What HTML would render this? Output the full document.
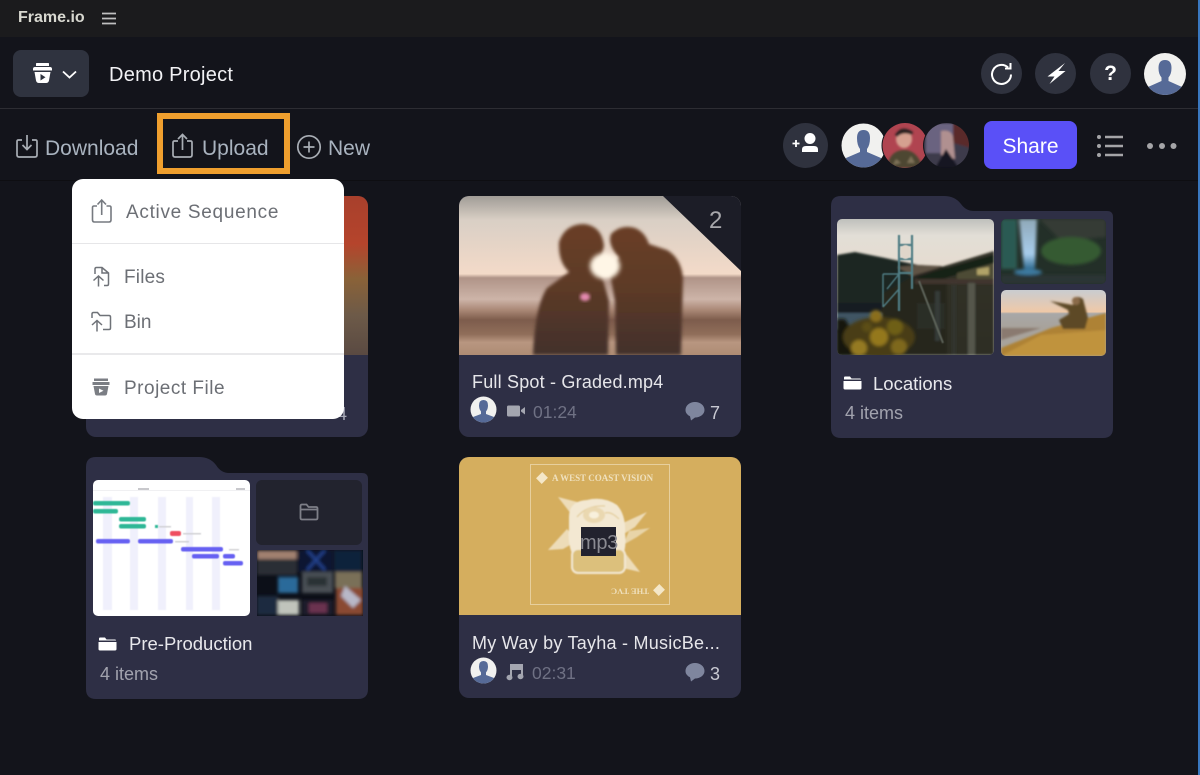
<!DOCTYPE html>
<html><head><meta charset="utf-8"><style>
*{box-sizing:border-box;margin:0;padding:0}
html,body{width:1200px;height:775px;overflow:hidden;background:#13141b}
body{position:relative;font-family:"Liberation Sans","DejaVu Sans",sans-serif;color:#e8e8ee}
.a{position:absolute}
.t{position:absolute;white-space:nowrap;line-height:1}
.card{position:absolute;width:282px;height:241px;background:#2e2f45;border-radius:10px;overflow:hidden}
.c{position:absolute;border-radius:50%;background:#2f323e}
svg{position:absolute;display:block}
</style></head><body>
<svg width="0" height="0" style="left:0;top:0"><defs>
<filter id="b04" x="-10%" y="-10%" width="120%" height="120%"><feGaussianBlur stdDeviation=".45"/></filter>
<filter id="b08" x="-10%" y="-10%" width="120%" height="120%"><feGaussianBlur stdDeviation=".8"/></filter>
<filter id="b1" x="-20%" y="-20%" width="140%" height="140%"><feGaussianBlur stdDeviation="1"/></filter>
<filter id="b2" x="-20%" y="-20%" width="140%" height="140%"><feGaussianBlur stdDeviation="1.500"/></filter>
<filter id="b3" x="-30%" y="-30%" width="160%" height="160%"><feGaussianBlur stdDeviation="2.500"/></filter>
<clipPath id="mc"><circle cx="13.500" cy="13.500" r="13"/></clipPath>
<g id="mini"><circle cx="13.500" cy="13.500" r="13" fill="#f1f1ef"/><path clip-path="url(#mc)" d="M9 9.500Q9 4 13.500 4T18 9.500Q18 13 16 15.500V18L24 21V27H3V21L11 18V15.500Q9 13 9 9.500Z" fill="#566a97"/></g>
</defs></svg>

<div class="a" style="left:0;top:0;width:1200px;height:37px;background:#1b1b1d"></div>
<div class="t" style="left:18px;top:10px;font-size:16px;font-weight:bold;color:#d8d8d0">Frame.io</div>
<svg style="left:102px;top:12px" width="14" height="13"><path d="M0 1.500H14M0 6.500H14M0 11.500H14" stroke="#c0c0c0" stroke-width="1.700"/></svg>
<div class="a" style="left:0;top:108px;width:1200px;height:1px;background:#2d2d33"></div>
<div class="a" style="left:0;top:180px;width:1200px;height:1px;background:#0e0e12"></div>
<div class="a" style="left:13px;top:50px;width:76px;height:47px;border-radius:8px;background:#2f333f"></div>
<svg style="left:32px;top:62px" width="48" height="24" viewBox="0 0 48 24"><path d="M4 1.500Q4 1 5 1H16Q17 1 17 1.500V4H4ZM1 7Q1 5 3 5H18Q20 5 20 7V8.500H1ZM2.500 10H18.500L17 18.500Q16.500 21 14 21H7Q4.500 21 4 18.500Z" fill="#fff"/><path d="M8.500 12L13.500 15.300L8.500 18.500Z" fill="#2f333f"/><path d="M31 9.500L37.500 15.500L44 9.500" stroke="#fff" stroke-width="1.800" fill="none"/></svg>
<div class="t" style="left:109px;top:65px;font-size:20px;letter-spacing:.25px;color:#f2f2f5">Demo Project</div>

<!-- top right circles -->
<div class="c" style="left:981px;top:53px;width:41px;height:41px"></div>
<svg style="left:981px;top:53px" width="41" height="41" viewBox="0 0 41 41"><path d="M27 14.500A9.500 9.500 0 1 0 30 21.500" stroke="#fff" stroke-width="2" fill="none"/><path d="M24 15.500H29.500V10" stroke="#fff" stroke-width="2" fill="none"/></svg>
<div class="c" style="left:1035px;top:53px;width:41px;height:41px"></div>
<svg style="left:1035px;top:53px" width="41" height="41" viewBox="0 0 41 41"><path d="M30 10L12.500 23.500H19.500L14.500 31L30.500 18H23.500Z" fill="#fff"/></svg>
<div class="c" style="left:1090px;top:53px;width:41px;height:41px"></div>
<div class="t" style="left:1090px;top:63px;width:41px;text-align:center;font-size:21px;font-weight:bold;color:#fff">?</div>
<svg style="left:1144px;top:53px" width="42" height="42" viewBox="0 0 42 42"><defs><clipPath id="av"><circle cx="21" cy="21" r="21"/></clipPath></defs><g clip-path="url(#av)"><rect width="42" height="42" fill="#f1f1ef"/><path d="M14.500 15Q14.500 7 21 7T27.500 15Q27.500 21 24.500 24.500V28L38 34V42H4V34L17.500 28V24.500Q14.500 21 14.500 15Z" fill="#566a97"/></g></svg>

<!-- toolbar -->
<svg style="left:15px;top:132px" width="24" height="28" viewBox="0 0 24 28"><path d="M7 8H3.500Q2 8 2 9.500V23Q2 25 4 25H20Q22 25 22 23V9.500Q22 8 20.500 8H17" stroke="#a9aeb5" stroke-width="1.700" fill="none"/><path d="M12 3V17M7.500 13L12 17.500L16.500 13" stroke="#a9aeb5" stroke-width="1.700" fill="none"/></svg>
<div class="t" style="left:45px;top:138px;font-size:21px;color:#a9b3bf">Download</div>
<div class="a" style="left:157px;top:113px;width:133px;height:61px;border:6px solid #ef9f2e"></div>
<svg style="left:171px;top:132px" width="24" height="28" viewBox="0 0 24 28"><path d="M7 9H3.500Q2 9 2 10.500V23Q2 25 4 25H19Q21 25 21 23V10.500Q21 9 19.500 9H16" stroke="#a9aeb5" stroke-width="1.700" fill="none"/><path d="M11.500 18V3M7 7L11.500 2.500L16 7" stroke="#a9aeb5" stroke-width="1.700" fill="none"/></svg>
<div class="t" style="left:202px;top:138px;font-size:21px;color:#a9b3bf">Upload</div>
<svg style="left:296px;top:134px" width="26" height="26" viewBox="0 0 26 26"><circle cx="13" cy="13" r="11.200" stroke="#a9aeb5" stroke-width="1.700" fill="none"/><path d="M13 7.500V18.500M7.500 13H18.500" stroke="#a9aeb5" stroke-width="1.700"/></svg>
<div class="t" style="left:328px;top:138px;font-size:21px;color:#a9b3bf">New</div>

<div class="c" style="left:783px;top:123px;width:45px;height:45px"></div>
<svg style="left:783px;top:123px" width="45" height="45" viewBox="0 0 45 45"><circle cx="27" cy="15.500" r="5.500" fill="#fff"/><path d="M19 29V26.500Q19 23 23 23H31Q35 23 35 26.500V29Z" fill="#fff"/><path d="M9.500 20.500H16.500M13 17V24" stroke="#fff" stroke-width="1.800"/></svg>
<svg style="left:841px;top:123px" width="130" height="45" viewBox="0 0 130 45"><defs><clipPath id="a1"><circle cx="22.500" cy="22.500" r="22"/></clipPath><clipPath id="a2"><circle cx="64" cy="22.500" r="22.500"/></clipPath><clipPath id="a3"><circle cx="105.500" cy="22.500" r="22.500"/></clipPath></defs>
<g clip-path="url(#a1)"><rect width="45" height="45" fill="#f1f1ef"/><path d="M16 15Q16 7 22.500 7T29 15Q29 22 26 26V29L40 35V45H5V35L19 29V26Q16 22 16 15Z" fill="#566a97"/></g>
<circle cx="64" cy="22.500" r="23.500" fill="#13141b"/>
<g clip-path="url(#a2)"><rect x="40" width="48" height="45" fill="#b04450"/><g filter="url(#b1)"><ellipse cx="63" cy="16" rx="8" ry="9" fill="#d5a090"/><path d="M54 12Q60 1 72 9L71 12Q62 8 56 14Z" fill="#2a2320"/><path d="M46 45Q48 28 62 27T82 45Z" fill="#4e4630"/><path d="M55 36L60 40L52 42ZM70 33L74 40L66 40Z" fill="#7e7258"/></g></g>
<circle cx="105.500" cy="22.500" r="23.500" fill="#13141b"/>
<g clip-path="url(#a3)"><g filter="url(#b1)"><rect x="82" width="48" height="45" fill="#3d3b4c"/><path d="M85 0H112V30H85Z" fill="#6b6380"/><path d="M112 0H130V25L112 20Z" fill="#5a2a2a"/><path d="M100 8Q110 6 112 14L114 36L100 32Z" fill="#b09090"/><path d="M94 45L105 26L118 45Z" fill="#141820"/></g></g></svg>
<div class="a" style="left:984px;top:121px;width:93px;height:48px;border-radius:8px;background:#5a50f7"></div>
<div class="t" style="left:984px;top:136px;width:93px;text-align:center;font-size:21px;color:#fff">Share</div>
<svg style="left:1095px;top:132px" width="30" height="28"><path d="M10 5H28M10 14H28M10 23H28" stroke="#a5a5a8" stroke-width="2.500"/><circle cx="4" cy="5" r="2" fill="#a5a5a8"/><circle cx="4" cy="14" r="2" fill="#a5a5a8"/><circle cx="4" cy="23" r="2" fill="#a5a5a8"/></svg>
<svg style="left:1146px;top:141px" width="32" height="10"><circle cx="4" cy="5" r="3" fill="#a5a5a8"/><circle cx="16" cy="5" r="3" fill="#a5a5a8"/><circle cx="27.500" cy="5" r="3" fill="#a5a5a8"/></svg>

<!-- card hidden under menu -->
<div class="card" style="left:86px;top:196px">
<div class="a" style="left:0;top:0;width:282px;height:159px;background:linear-gradient(180deg,#a8402c 0,#b5442c 30%,#8a6238 52%,#6d5a48 75%,#5a4a42 100%)"></div>
</div>
<div class="t" style="left:337px;top:405px;font-size:18px;color:#a9abb8">4</div>

<!-- Full spot card -->
<div class="card" style="left:459px;top:196px">
<svg style="left:0;top:0" width="282" height="159" viewBox="0 0 282 159"><defs>
<linearGradient id="sky" x1="0" y1="0" x2="0" y2="1"><stop offset="0" stop-color="#a09c96"/><stop offset=".15" stop-color="#d9cfc5"/><stop offset=".49" stop-color="#f3dac8"/><stop offset=".515" stop-color="#b09488"/><stop offset=".65" stop-color="#cdb4a8"/><stop offset=".72" stop-color="#a88674"/><stop offset=".78" stop-color="#7d5c4c"/><stop offset=".87" stop-color="#906e5a"/><stop offset=".92" stop-color="#b89680"/><stop offset="1" stop-color="#ae8c74"/></linearGradient>
<linearGradient id="fig" x1="0" y1="0" x2="0" y2="1"><stop offset="0" stop-color="#6a3f28"/><stop offset=".5" stop-color="#5c3a28"/><stop offset="1" stop-color="#42302a"/></linearGradient></defs>
<rect width="282" height="159" fill="url(#sky)"/>
<g filter="url(#b2)"><path d="M74 159Q76 110 88 92L110 76Q99 66 100 46Q106 28 125 28Q143 30 145 50L140 70L150 105L149 159Z" fill="url(#fig)"/><path d="M157 159L156 105L150 72L160 62Q148 48 152 38Q162 28 176 32Q186 36 190 48L208 54Q222 62 224 82L222 159Z" fill="url(#fig)"/></g>
<ellipse cx="146" cy="70" rx="15" ry="13" fill="#fff6e6" filter="url(#b3)"/><ellipse cx="126" cy="101" rx="5" ry="4" fill="#e58ab0" filter="url(#b2)"/>
<path d="M204 0H282V75Z" fill="#1c1d27"/></svg>
<div class="t" style="left:250px;top:13px;font-size:24px;color:#a8a8ac">2</div>
<div class="t" style="left:13px;top:177px;font-size:18px;letter-spacing:.2px;color:#e6e6ea">Full Spot - Graded.mp4</div>
<svg style="left:11px;top:200px" width="27" height="27" viewBox="0 0 27 27"><use href="#mini"/></svg>
<svg style="left:48px;top:209px" width="19" height="12"><rect width="13" height="11" rx="1.500" y=".5" fill="#a4a6b0"/><path d="M14 5L18 2V9.500L14 6.500Z" fill="#a4a6b0"/></svg>
<div class="t" style="left:74px;top:208px;font-size:17.500px;color:#6f7184">01:24</div>
<svg style="left:226px;top:205px" width="20" height="20" viewBox="0 0 20 20"><path d="M10 1C4.500 1 .5 4.500 .5 9C.5 12 2.500 14 5 15.300L6 19.500L10 16.500C15.500 16.500 19.500 13 19.500 9C19.500 4.500 15.500 1 10 1Z" fill="#7f869e"/></svg>
<div class="t" style="left:251px;top:208px;font-size:18px;color:#c8c9d2">7</div>
</div>

<!-- Locations folder -->
<svg style="left:831px;top:196px" width="282" height="242" viewBox="0 0 282 242"><path d="M0 10Q0 0 10 0H113Q124 0 130 8Q135 15 143 15H276Q282 15 282 21V232Q282 242 272 242H10Q0 242 0 232Z" fill="#2e2f45"/></svg>
<svg style="left:837px;top:219px" width="157" height="136" viewBox="0 0 157 136"><defs><clipPath id="r1"><rect width="157" height="136" rx="5"/></clipPath><linearGradient id="ls" x1="0" y1="0" x2="0" y2="1"><stop offset="0" stop-color="#bfc0bc"/><stop offset=".12" stop-color="#e2ded6"/><stop offset=".35" stop-color="#e6dcd0"/><stop offset="1" stop-color="#a5a8a0"/></linearGradient></defs>
<g clip-path="url(#r1)"><rect width="157" height="136" fill="url(#ls)"/>
<g filter="url(#b1)"><path d="M0 36L18 33L48 39L81 46L110 48V136H0Z" fill="#1c2522"/><path d="M60 48L81 46L105 47L80 60Z" fill="#5e5244"/>
<rect y="84" width="110" height="30" fill="#161d20"/><rect y="94" width="45" height="16" fill="#3f5464"/><rect x="80" y="84" width="28" height="26" fill="#96a6ae"/>
<path d="M45 136V75L78 56L157 32V136Z" fill="#26261f" opacity=".95"/><path d="M80 58L157 36V46L80 66Z" fill="#142019"/><path d="M120 54L157 44V62H120Z" fill="#4e4c36"/><path d="M140 50L152 48V56H140Z" fill="#b0a268"/><rect x="78" y="60" width="79" height="5" fill="#40362d"/>
<rect x="131" y="64" width="7" height="72" fill="#54564c"/><rect x="115" y="66" width="4" height="70" fill="#33352f"/><rect x="98" y="72" width="5" height="50" fill="#343a38"/></g>
<g filter="url(#b04)" fill="none" stroke="#4f7d84" stroke-width="2.200"><path d="M62 16V92M75 16V70M62 26H75M62 40H75M62 54H75"/><path d="M46 55H62M46 55V88M50 70L62 55M62 70L46 88" stroke-width="1.400"/></g>
<ellipse cx="68.500" cy="33" rx="5" ry="7" fill="#e0d6ca" filter="url(#b04)"/>
<path d="M82 62L106 124" stroke="#5c6259" stroke-width="2" filter="url(#b04)"/>
<g filter="url(#b2)"><path d="M0 100H8L30 136H0Z" fill="#12170f"/><ellipse cx="42" cy="118" rx="36" ry="20" fill="#4a3e14"/><circle cx="39" cy="97" r="6" fill="#8a6e1c"/><circle cx="58" cy="108" r="8" fill="#6e5e18"/><circle cx="42" cy="118" r="9" fill="#94781f"/><circle cx="22" cy="129" r="8" fill="#957a22"/><circle cx="62" cy="128" r="8" fill="#7e671c"/><circle cx="30" cy="108" r="5" fill="#5c4e14"/></g></g></svg>
<svg style="left:1001px;top:219px" width="105" height="65" viewBox="0 0 105 65"><defs><clipPath id="r2"><rect width="105" height="65" rx="5"/></clipPath><linearGradient id="fall" x1="0" y1="0" x2="0" y2="1"><stop offset="0" stop-color="#8fa8b8"/><stop offset=".7" stop-color="#a8cdec"/><stop offset="1" stop-color="#2d6a90"/></linearGradient></defs>
<g clip-path="url(#r2)"><rect width="105" height="65" fill="#232f28"/><g filter="url(#b2)"><path d="M0 0H16V50H0Z" fill="#2a5a52"/><path d="M38 0H105V18L60 22Z" fill="#343a35"/><ellipse cx="70" cy="32" rx="30" ry="14" fill="#345a33"/><path d="M18 0H36L34 50H23Z" fill="url(#fall)"/><ellipse cx="27" cy="53" rx="14" ry="3" fill="#3d7aa0"/><rect y="56" width="105" height="9" fill="#2c3534"/></g></g></svg>
<svg style="left:1001px;top:290px" width="105" height="66" viewBox="0 0 105 66"><defs><clipPath id="r3"><rect width="105" height="66" rx="5"/></clipPath><linearGradient id="s3" x1="0" y1="0" x2="0" y2="1"><stop offset="0" stop-color="#c9ccd0"/><stop offset=".33" stop-color="#efc9a8"/><stop offset=".36" stop-color="#a8a8a8"/><stop offset=".55" stop-color="#a8a39c"/></linearGradient></defs>
<g clip-path="url(#r3)"><rect width="105" height="66" fill="url(#s3)"/><g filter="url(#b1)"><path d="M0 38H40L0 50Z" fill="#8a7a70"/><path d="M0 58L50 38L105 23V66H0Z" fill="#ae8234"/><path d="M0 66L40 45L105 40V66Z" fill="#c0933c"/><path d="M49 11L72 15L72 9Q76 5 82 9L87 28L84 39H62L58 30L68 24L67 20Z" fill="#5d4a28"/><circle cx="75" cy="11" r="4" fill="#8a6a48"/></g></g></svg>
<svg style="left:843px;top:376px" width="20" height="14" viewBox="0 0 20 14"><path d="M1 1.500Q1 .5 2 .5H7L8.500 2.500H17Q18 2.500 18 3.500H1Z" fill="#fff"/><path d="M.5 5H18.500V12Q18.500 13.500 17 13.500H2Q.5 13.500 .5 12Z" fill="#fff"/></svg>
<div class="t" style="left:873px;top:375px;font-size:18.500px;color:#e8e8ec">Locations</div>
<div class="t" style="left:845px;top:404px;font-size:18px;color:#a2a3ae">4 items</div>

<!-- Pre-production -->
<svg style="left:86px;top:457px" width="282" height="242" viewBox="0 0 282 242"><path d="M0 10Q0 0 10 0H113Q124 0 130 8Q135 16 143 16H276Q282 16 282 22V232Q282 242 272 242H10Q0 242 0 232Z" fill="#2e2f45"/></svg>
<svg style="left:93px;top:480px" width="157" height="136" viewBox="0 0 157 136"><defs><clipPath id="r4"><rect width="157" height="136" rx="5"/></clipPath></defs><g clip-path="url(#r4)"><rect width="157" height="136" fill="#fff"/>
<g fill="#f0f0fc" filter="url(#b04)"><rect x="10" y="17" width="9" height="113"/><rect x="37" y="17" width="8" height="113"/><rect x="65" y="17" width="8" height="113"/><rect x="93" y="17" width="7" height="113"/><rect x="119" y="17" width="8" height="113"/></g>
<rect y="10" width="157" height="1" fill="#f0f0f2"/><rect x="45" y="8" width="11" height="2" fill="#c8c8cc"/><rect x="143" y="8" width="9" height="2" fill="#c8c8cc"/>
<g filter="url(#b04)"><g fill="#2fb796"><rect y="21" width="37" height="4.500" rx="2"/><rect y="29" width="25" height="4.500" rx="2"/><rect x="26" y="37" width="27" height="4.500" rx="2"/><rect x="26" y="44" width="27" height="4.500" rx="2"/><rect x="62" y="45" width="3" height="3"/></g>
<rect x="77" y="51" width="11" height="5" rx="2" fill="#ef4e5e"/>
<g fill="#6661f2"><rect x="3" y="59" width="34" height="4.500" rx="2"/><rect x="45" y="59" width="35" height="4.500" rx="2"/><rect x="88" y="67" width="42" height="4.500" rx="2"/><rect x="99" y="74" width="27" height="4.500" rx="2"/><rect x="130" y="74" width="12" height="4.500" rx="2"/><rect x="130" y="81" width="20" height="4.500" rx="2"/></g>
<g fill="#d0d0d4"><rect x="66" y="46" width="12" height="1.500"/><rect x="90" y="53" width="18" height="1.500"/><rect x="82" y="61" width="14" height="1.500"/><rect x="136" y="69" width="10" height="1.500"/></g></g></g></svg>
<div class="a" style="left:256px;top:480px;width:106px;height:65px;border-radius:6px;background:#22232e"></div>
<svg style="left:299px;top:503px" width="20" height="18" viewBox="0 0 20 18"><path d="M1.500 3Q1.500 1.500 3 1.500H7.500L9.500 4H17Q18.500 4 18.500 5.500V15Q18.500 16.500 17 16.500H3Q1.500 16.500 1.500 15ZM1.500 6.500H18.500" stroke="#7e7f88" stroke-width="1.800" fill="none"/></svg>
<svg style="left:257px;top:550px" width="106" height="66" viewBox="0 0 106 66"><rect width="106" height="66" fill="#0c0f18"/><g filter="url(#b2)"><rect width="40" height="25" fill="#2a2d34"/><rect y="1" width="40" height="8" fill="#a08070"/><rect x="41" width="35" height="22" fill="#0c1230"/><path d="M50 0L68 20M68 0L50 20" stroke="#22408a" stroke-width="3"/><rect x="77" width="28" height="22" fill="#10203a"/><rect x="21" y="27" width="20" height="16" fill="#2a6a9a"/><rect x="45" y="22" width="31" height="21" fill="#4a5055"/><rect x="50" y="27" width="20" height="9" fill="#2c3036"/><rect x="78" y="22" width="27" height="16" fill="#7a7058"/><rect x="79" y="38" width="27" height="27" fill="#8a4a30"/><path d="M88 36L104 50L96 58L84 46Z" fill="#b8b8c8"/><rect y="46" width="21" height="19" fill="#1a2a40"/><rect x="21" y="50" width="21" height="15" fill="#c0c4bc"/><rect x="45" y="50" width="31" height="15" fill="#1e1a2a"/><rect x="52" y="53" width="18" height="10" fill="#6a3050"/></g></svg>
<svg style="left:98px;top:637px" width="20" height="14" viewBox="0 0 20 14"><path d="M1 1.500Q1 .5 2 .5H7L8.500 2.500H17Q18 2.500 18 3.500H1Z" fill="#fff"/><path d="M.5 5H18.500V12Q18.500 13.500 17 13.500H2Q.5 13.500 .5 12Z" fill="#fff"/></svg>
<div class="t" style="left:129px;top:635px;font-size:18.500px;color:#e8e8ec">Pre-Production</div>
<div class="t" style="left:100px;top:665px;font-size:18px;color:#a2a3ae">4 items</div>

<!-- MP3 -->
<div class="card" style="left:459px;top:457px;height:241px">
<div class="a" style="left:0;top:0;width:282px;height:158px;background:#d5ae5e"></div>
<div class="a" style="left:71px;top:7px;width:140px;height:141px;border:1.500px solid #e7cf9d"></div>
<div class="a" style="left:79px;top:17px;width:8px;height:8px;background:#f4e7c8;transform:rotate(45deg) scale(1,1.100)"></div>
<div class="t" style="left:93px;top:17px;font-size:9px;font-weight:bold;font-family:'Liberation Serif',serif;color:#efe0bd">A WEST COAST VISION</div>
<div class="a" style="left:196px;top:129px;width:8px;height:8px;background:#f4e7c8;transform:rotate(45deg) scale(1,1.100)"></div>
<div class="t" style="left:152px;top:130px;font-size:8.500px;font-weight:bold;font-family:'Liberation Serif',serif;color:#efe0bd;transform:rotate(180deg)">THE TVC</div>
<svg style="left:0;top:0" width="282" height="158" viewBox="0 0 282 158"><g filter="url(#b08)">
<path d="M99 40L122 46L116 62Z" fill="#eddcb8"/><path d="M89 93L108 72L118 84L104 92Z" fill="#eddcb8"/><path d="M188 55L164 66L160 80L176 70Z" fill="#eddcb8"/><path d="M191 71L170 74L164 88L178 80Z" fill="#e8d4a8"/><path d="M181 115L160 88L150 108Z" fill="#eddcb8"/>
<path d="M110 60Q110 44 128 43Q144 39 158 48Q167 58 166 76Q168 92 162 104H116Q108 88 110 72Z" fill="#f3e8d2"/>
<rect x="113" y="92" width="53" height="24" rx="6" fill="#dcc07c" stroke="#f3e8d2" stroke-width="2"/>
<path d="M118 60Q128 48 146 49M160 62Q152 54 146 56" stroke="#e2cc98" stroke-width="1.200" fill="none"/><ellipse cx="135" cy="58" rx="11" ry="8" fill="#ead8b0"/><ellipse cx="135" cy="58" rx="5" ry="3.500" fill="#f8f0dc"/></g></svg>
<div class="a" style="left:122px;top:70px;width:35px;height:29px;background:#22222e"></div>
<div class="t" style="left:121px;top:76px;font-size:20px;color:#8a8a92;letter-spacing:-.3px">mp3</div>
<div class="t" style="left:13px;top:177px;font-size:18px;letter-spacing:.25px;color:#e6e6ea">My Way by Tayha - MusicBe...</div>
<svg style="left:11px;top:200px" width="27" height="27" viewBox="0 0 27 27"><use href="#mini"/></svg>
<svg style="left:47px;top:206px" width="19" height="18" viewBox="0 0 19 18"><path d="M5 3V14M16 2V13M5 2H16V6H5Z" stroke="#a4a6b0" stroke-width="2" fill="#a4a6b0"/><ellipse cx="3.500" cy="14.500" rx="3" ry="2.700" fill="#a4a6b0"/><ellipse cx="14.500" cy="13.500" rx="3" ry="2.700" fill="#a4a6b0"/></svg>
<div class="t" style="left:73px;top:208px;font-size:17.500px;color:#6f7184">02:31</div>
<svg style="left:226px;top:205px" width="20" height="20" viewBox="0 0 20 20"><path d="M10 1C4.500 1 .5 4.500 .5 9C.5 12 2.500 14 5 15.300L6 19.500L10 16.500C15.500 16.500 19.500 13 19.500 9C19.500 4.500 15.500 1 10 1Z" fill="#7f869e"/></svg>
<div class="t" style="left:251px;top:208px;font-size:18px;color:#c8c9d2">3</div>
</div>

<!-- Dropdown -->
<div class="a" style="left:72px;top:179px;width:272px;height:240px;background:#fff;border-radius:11px"></div>
<div class="a" style="left:72px;top:243px;width:272px;height:1px;background:#e6e6e8"></div>
<div class="a" style="left:72px;top:353px;width:272px;height:2px;background:#e9e9eb"></div>
<svg style="left:91px;top:198px" width="22" height="26" viewBox="0 0 22 26"><path d="M6 8H3Q1.500 8 1.500 9.500V22Q1.500 24 3.500 24H18Q20 24 20 22V9.500Q20 8 18.500 8H15.500" stroke="#767a80" stroke-width="1.600" fill="none"/><path d="M10.700 17V2.500M6.500 6.500L10.700 2L15 6.500" stroke="#767a80" stroke-width="1.600" fill="none"/></svg>
<div class="t" style="left:126px;top:203px;font-size:19px;letter-spacing:.7px;color:#6c6f75">Active Sequence</div>
<svg style="left:91px;top:266px" width="20" height="22" viewBox="0 0 20 22"><path d="M4 8V3Q4 1.500 5.500 1.500H11L17.500 7V18Q17.500 19.500 16 19.500H13M11 2V7H17.500" stroke="#6f7278" stroke-width="1.500" fill="none"/><path d="M7.500 20.500V10M2.500 14.500L7.500 10L12.500 14.500" stroke="#6f7278" stroke-width="1.500" fill="none"/></svg>
<div class="t" style="left:124px;top:268px;font-size:19px;letter-spacing:.2px;color:#6c6f75">Files</div>
<svg style="left:90px;top:311px" width="22" height="22" viewBox="0 0 22 22"><path d="M2 7V3Q2 1.500 3.500 1.500H7.500L10 4.500H19Q20.500 4.500 20.500 6V17Q20.500 18.500 19 18.500H13" stroke="#6f7278" stroke-width="1.500" fill="none"/><path d="M7 20.500V9.500M2 14L7 9.500L12 14" stroke="#6f7278" stroke-width="1.500" fill="none"/></svg>
<div class="t" style="left:124px;top:313px;font-size:19px;color:#6c6f75">Bin</div>
<svg style="left:92px;top:378px" width="18" height="18" viewBox="0 0 18 18"><path d="M2 .5H16V3H2ZM.5 4H17.500V7H.5ZM1.500 8H16.500L15 16Q14.700 17.500 13 17.500H5Q3.300 17.500 3 16Z" fill="#7b7e84"/><path d="M7 10.500L11.500 12.700L7 15Z" fill="#fff"/></svg>
<div class="t" style="left:124px;top:379px;font-size:19px;letter-spacing:.5px;color:#6c6f75">Project File</div>

<div class="a" style="left:1198px;top:0;width:2px;height:775px;background:#3a78c0"></div>
</body></html>
